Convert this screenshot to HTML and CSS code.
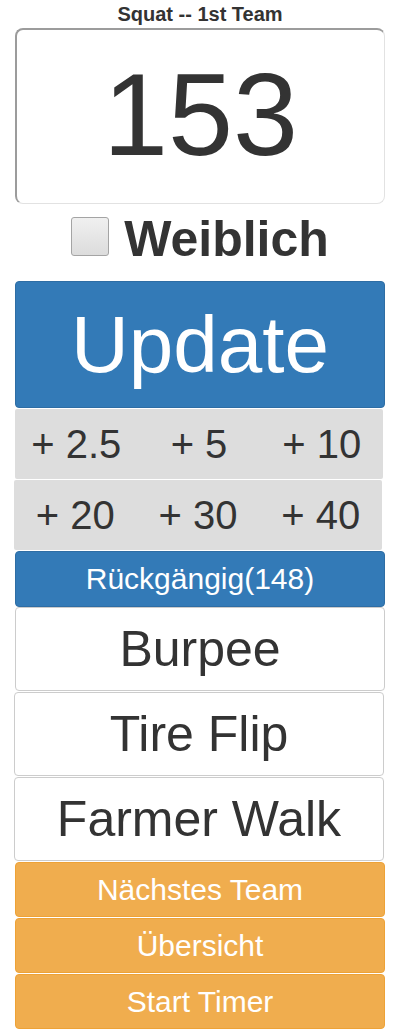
FILE: index.html
```html
<!DOCTYPE html>
<html>
<head>
<meta charset="utf-8">
<link rel="stylesheet" href="styles.css">
</head>
<body>
<div class="page">
  <div class="title">Squat -- 1st Team</div>
  <div class="score">153</div>
  <label class="female">
    <span class="check"></span>
    <span class="female-text">Weiblich</span>
  </label>
  <div class="btn btn-update">Update</div>
  <div class="plus-row row-a">
    <div class="plus">+ 2.5</div>
    <div class="plus">+ 5</div>
    <div class="plus">+ 10</div>
  </div>
  <div class="plus-row row-b">
    <div class="plus">+ 20</div>
    <div class="plus">+ 30</div>
    <div class="plus">+ 40</div>
  </div>
  <div class="btn btn-undo">Rückgängig(148)</div>
  <div class="btn btn-event ev-first">Burpee</div>
  <div class="btn btn-event ev-shift">Tire Flip</div>
  <div class="btn btn-event ev-shift">Farmer Walk</div>
  <div class="btn btn-warn">Nächstes Team</div>
  <div class="btn btn-warn">Übersicht</div>
  <div class="btn btn-warn">Start Timer</div>
</div>
</body>
</html>
```
FILE: styles.css
```css
html, body {
  margin: 0;
  padding: 0;
  background: #fff;
}
body {
  font-family: "Liberation Sans", Arial, sans-serif;
  color: #333;
}
.page {
  width: 370px;
  margin: 0 15px;
}
.title {
  font-weight: bold;
  font-size: 20px;
  line-height: 28px;
  height: 28px;
  text-align: center;
}
.score {
  box-sizing: border-box;
  height: 176px;
  border: 1px solid #e2e2e2;
  border-top: 2px solid #9c9c9c;
  border-left: 2px solid #9c9c9c;
  border-radius: 8px;
  font-size: 117px;
  line-height: 170px;
  text-align: center;
}
.female {
  display: flex;
  justify-content: center;
  align-items: center;
  gap: 15px;
  padding: 11px 0 18px;
  line-height: 48px;
}
.check {
  box-sizing: border-box;
  width: 38px;
  height: 39px;
  margin-bottom: 5px;
  border: 1px solid #a4a4a4;
  border-radius: 3px;
  background: linear-gradient(#f0f0f0, #dcdcdc);
}
.female-text {
  font-weight: bold;
  font-size: 50px;
}
.btn {
  box-sizing: border-box;
  text-align: center;
  border-radius: 4px;
  border: 1px solid transparent;
}
.btn-update {
  height: 127px;
  line-height: 125px;
  font-size: 80px;
  color: #fff;
  background: #337ab7;
  border-color: #2e6da4;
}
.plus-row {
  display: grid;
  grid-template-columns: repeat(3, 1fr);
  width: 368px;
  height: 70px;
  margin-top: 1px;
  background: #dddddd;
  border-radius: 2px;
}
.row-b {
  margin-left: -1px;
}
.plus {
  font-size: 40px;
  line-height: 70px;
  text-align: center;
}
.btn-undo {
  margin-top: 1px;
  height: 56px;
  line-height: 54px;
  font-size: 30px;
  color: #fff;
  background: #337ab7;
  border-color: #2e6da4;
}
.btn-event {
  height: 84px;
  line-height: 82px;
  font-size: 50px;
  background: #fff;
  border-color: #cccccc;
  color: #333;
}
.ev-first {
  width: 370px;
}
.ev-shift {
  width: 370px;
  margin-left: -1px;
  margin-top: 1px;
}
.btn-warn {
  margin-top: 1px;
  height: 55px;
  line-height: 53px;
  font-size: 30px;
  color: #fff;
  background: #f0ad4e;
  border-color: #eea236;
}
```
